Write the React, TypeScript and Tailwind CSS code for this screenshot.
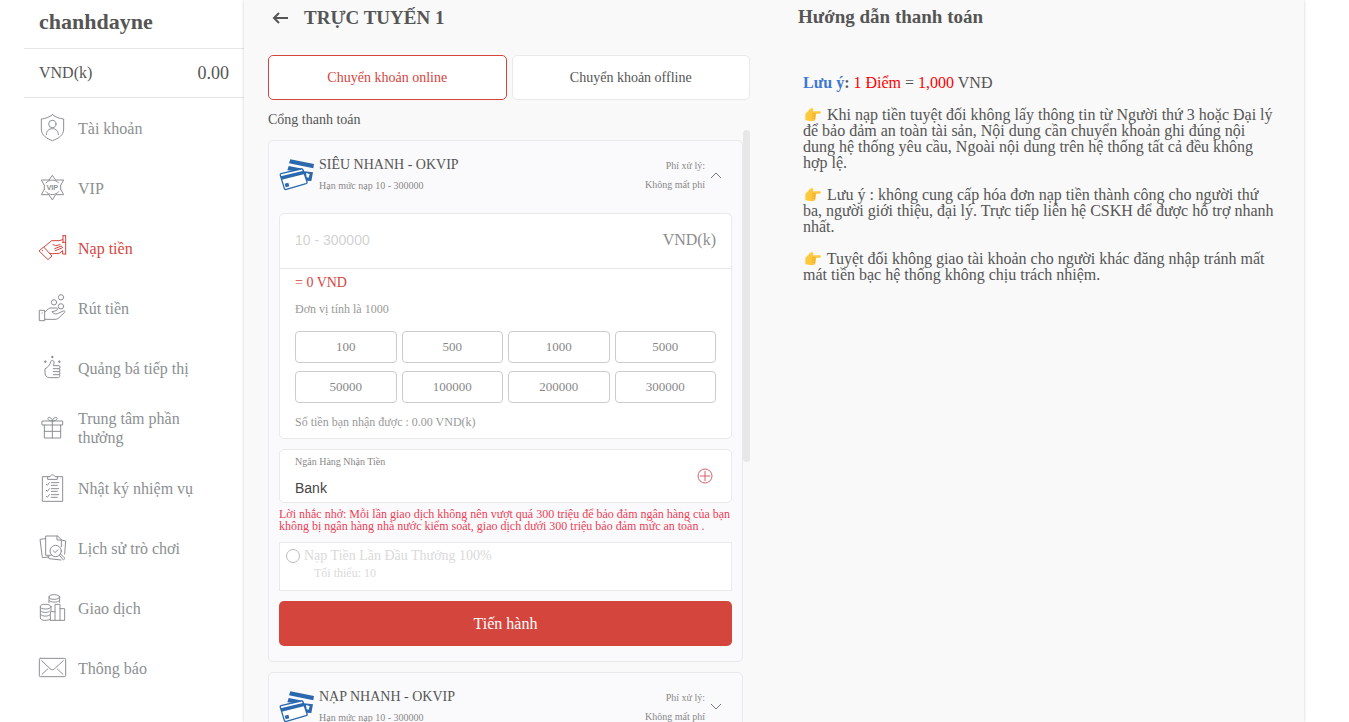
import { useState } from "react";
import type { ReactNode } from "react";

type MenuItem = {
  label: string;
  icon: ReactNode;
};

const menu: MenuItem[] = [
  {
    label: "Tài khoản",
    icon: (
      <>
        <path d="M43.500 2C33 10 22 14 10 15v30c0 19 15 28 33.500 35C62 73 77 64 77 45V15C65 14 54 10 43.500 2z" />
        <circle cx="43" cy="30" r="11" />
        <path d="M25 62c0-11 7-18 18-18s18 7 18 18" />
      </>
    ),
  },
  {
    label: "VIP",
    icon: (
      <>
        <path d="M33 18L43 4l10 14h24L68 34M33 18H10l9 16M19 46L10 62h23l10 16 10-16h24l-9-16" />
        <path d="M24 27a24 24 0 0 1 38 0M24 53a24 24 0 0 0 38 0M19 34v12M68 34v12" />
        <text
          x="43"
          y="48"
          textAnchor="middle"
          fontSize="22"
          fontWeight="bold"
          fontFamily="Liberation Sans, sans-serif"
          fill="currentColor"
          stroke="none"
        >
          VIP
        </text>
      </>
    ),
  },
  {
    label: "Nạp tiền",
    icon: (
      <>
        <path d="M4 50l13-11 25 27-11 10z" />
        <path d="M13 50h1" />
        <path d="M18 39l23-19h22l11-3M36 58l8 1 20-1 10-8M45 32l8 3 13-3M50 44l20-8 4 5-22 9" />
        <path d="M83 5v55M75 5h8M75 5v21M83 25h-9M74 51v9h9" />
      </>
    ),
  },
  {
    label: "Rút tiền",
    icon: (
      <>
        <path d="M5 49h15v31H5zM12 57h1" />
        <path d="M20 54c6-1 8-10 16-12h22c3 2 0 6-4 8l-12 3c2 4 9 9 16 6l18-8c5-2 6 3 3 5L62 72c-4 3-7 4-11 4H20" />
        <circle cx="69" cy="10" r="8" />
        <circle cx="48" cy="25" r="8" />
        <circle cx="69" cy="37" r="8" />
      </>
    ),
  },
  {
    label: "Quảng bá tiếp thị",
    icon: (
      <>
        <path d="M22 44c8-4 15-12 16-21 1-5 9-5 10 1 1 4-1 8-2 11h17c4 0 4 8 0 9 4 0 4 8 0 9 4 0 4 8 0 9 4 0 3 8-2 9H35c-8 0-14-5-14-13z" />
        <path d="M46 44h18M46 53h18M46 62h18" />
        <path d="M43 7v4M41 9h4M22 21v4M20 23h4M64 21v4M62 23h4" strokeWidth="4" />
      </>
    ),
  },
  {
    label: "Trung tâm phần thưởng",
    icon: (
      <>
        <rect x="13" y="21" width="61" height="12" />
        <path d="M19 33v39h49V33M43 21v51M19 52h49" />
        <path d="M43 21c-7 0-15-3-13-9 3-5 12 0 13 9 2-9 11-14 14-9 2 6-7 9-14 9z" />
      </>
    ),
  },
  {
    label: "Nhật ký nhiệm vụ",
    icon: (
      <>
        <path d="M30 8H13v74h61V8H57" />
        <path d="M29 15V8h7c2-7 13-7 15 0h7v7z" />
        <path d="M25 31l3 3 6-8M40 26h22M40 34h18M25 49l3 3 6-8M40 44h22M40 52h18M25 67l3 3 6-8M40 62h22M40 70h18" />
      </>
    ),
  },
  {
    label: "Lịch sử trò chơi",
    icon: (
      <>
        <path d="M23 14L6 16l7 55 20-2M39 64H23V6h36l11 11v21M57 6v12h12M70 18l13 3-3 39M30 66l3 8 36 4" />
        <circle cx="53" cy="51" r="17" />
        <path d="M46 50l5 6 9-9M65 63l3-3 13 13-4 4z" />
      </>
    ),
  },
  {
    label: "Giao dịch",
    icon: (
      <>
        <ellipse cx="49" cy="9" rx="16" ry="7" />
        <path d="M33 9v17M65 9v16M34 20c5 6 25 6 30 0" />
        <ellipse cx="23" cy="38" rx="16" ry="7" />
        <path d="M7 38v34c0 9 25 9 30 3M39 38v12M7 49c1 7 21 9 27 3M7 60c1 7 21 9 28 3" />
        <path d="M37 79V53h14M51 79V31h15v48M66 44h14v35H37" />
      </>
    ),
  },
  {
    label: "Thông báo",
    icon: (
      <>
        <rect x="4" y="13" width="79" height="55" rx="3" />
        <path d="M11 20l25 24c4 4 10 4 14 0l26-24M12 61l17-16M75 61L58 45" />
      </>
    ),
  },
];

const amounts = [100, 500, 1000, 5000, 50000, 100000, 200000, 300000];

function CardsIcon() {
  return (
    <svg viewBox="0 0 108 108" className="size-9 shrink-0" aria-hidden="true">
      <g fill="#2b68ae">
        <path d="M34 7l71 14-2 13-73-15z" />
        <path d="M25 40l4-13 42 8 4 8 27 3-5 26-14-1-9-26z" />
      </g>
      <path d="M81 48l11 3-3 11-6-1z" fill="#fff" />
      <path
        d="M6 50l60-14c3-1 5 0 6 3l12 35c1 3 0 5-3 6L22 97c-3 1-5 0-6-3L4 55c-1-3 0-4 2-5z"
        fill="#fff"
        stroke="#2b68ae"
        strokeWidth="4"
      />
      <path d="M5 58l69-17 3 10L8 68zM17 80l11-3 3 11-11 3z" fill="#2b68ae" />
    </svg>
  );
}

function PointingHand() {
  return (
    <svg
      viewBox="0 0 48 48"
      className="mx-0.5 inline-block size-4 align-top"
      aria-hidden="true"
    >
      <path
        d="M1 20c5-3 9-8 13-13 3-4 10-5 11-1 1 3-2 5-2 7h20c6 0 6 7 0 7H31c3 2 3 6 0 7 3 2 2 6-1 7 2 3 0 6-3 7-2 1-7 2-12 1-6-1-10-2-14-2z"
        fill="#ffc83d"
      />
      <path
        d="M31 20h-7M31 27h-8M30 34h-7"
        stroke="#e08f1b"
        strokeWidth="2"
        strokeLinecap="round"
        fill="none"
      />
    </svg>
  );
}

function Chevron({ open }: { open: boolean }) {
  return (
    <svg
      viewBox="0 0 12 12"
      className="size-3 shrink-0"
      fill="none"
      stroke="#767676"
      aria-hidden="true"
    >
      <path d={open ? "M1 9l5-5 5 5" : "M1 3l5 5 5-5"} />
    </svg>
  );
}

function MethodHeader({ name, open }: { name: string; open: boolean }) {
  return (
    <button
      type="button"
      aria-expanded={open}
      className="flex h-[72px] w-full items-center justify-between pr-2.5 pb-[5px] text-left"
    >
      <span className="flex items-center gap-1">
        <CardsIcon />
        <span className="flex flex-col">
          <span className="text-[14px] leading-[22px] text-[#555]">{name}</span>
          <span className="text-[10px] leading-5 text-[#888]">
            Hạn mức nạp 10 - 300000
          </span>
        </span>
      </span>
      <span className="flex items-center gap-[5px]">
        <span className="flex flex-col text-right text-[10px] leading-[19px] text-[#888]">
          <span>Phí xử lý:</span>
          <span>Không mất phí</span>
        </span>
        <Chevron open={open} />
      </span>
    </button>
  );
}

function Sidebar() {
  return (
    <aside className="w-[220px] shrink-0">
      <h2 className="h-12 px-[15px] pt-2 text-[22px] leading-7 font-bold">
        chanhdayne
      </h2>
      <div className="flex h-[50px] items-center justify-between border-y border-[#e6e6e6] px-[15px]">
        <span>VND(k)</span>
        <span className="text-[18px]">0.00</span>
      </div>
      <nav>
        {menu.map((item) => (
          <a
            key={item.label}
            href="#"
            className={`flex h-[60px] items-center gap-3 pr-10 pl-[14px] leading-[19px] ${
              item.label === "Nạp tiền" ? "text-[#d4453e]" : "text-[#8c8f92]"
            }`}
          >
            <svg
              viewBox="0 0 84 84"
              className="size-7 shrink-0 overflow-visible"
              fill="none"
              stroke="currentColor"
              strokeWidth="3"
              strokeLinejoin="round"
              strokeLinecap="round"
              aria-hidden="true"
            >
              {item.icon}
            </svg>
            {item.label}
          </a>
        ))}
      </nav>
    </aside>
  );
}

function DepositForm() {
  const [amount, setAmount] = useState<string>("");

  return (
    <div>
      <div className="rounded-[5px] border border-[#e9e9eb] bg-white">
        <div className="flex h-[55px] items-center justify-between border-b border-[#e6e6e6] px-[15px] pb-0.5 text-[#8c8c8c]">
          <input
            type="text"
            aria-label="10 - 300000"
            placeholder="10 - 300000"
            value={amount}
            onChange={(e) => setAmount(e.target.value)}
            className="min-w-0 flex-1 font-['Liberation_Sans',sans-serif] text-[14px] outline-none placeholder:text-[#d3d3d3]"
          />
          <span>VND(k)</span>
        </div>
        <div className="px-[15px] text-[12px] text-[#999]">
          <p className="pt-[3px] text-[14px] leading-[22px] text-[#d4453e]">
            = {Number(amount) * 1000 || 0} VND
          </p>
          <p className="pt-[3px] leading-6">Đơn vị tính là 1000</p>
          <div className="mt-2.5 grid grid-cols-4 gap-x-[5px] gap-y-2">
            {amounts.map((value) => (
              <button
                key={value}
                type="button"
                onClick={() => setAmount(String(value))}
                className="h-8 rounded border border-[#ccc] text-[13px] text-[#888]"
              >
                {value}
              </button>
            ))}
          </div>
          <p className="pt-2 pb-[5px] leading-[22px]">
            Số tiền bạn nhận được : 0.00 VND(k)
          </p>
        </div>
      </div>

      <div className="mt-2.5 flex h-[54px] items-center justify-between rounded-[5px] border border-[#e9e9eb] bg-white pr-[18px] pl-[15px]">
        <div className="flex min-w-0 flex-1 flex-col">
          <label htmlFor="bank" className="text-[10px] leading-6 text-[#888]">
            Ngân Hàng Nhận Tiền
          </label>
          <input
            id="bank"
            type="text"
            defaultValue="Bank"
            className="h-7 font-['Liberation_Sans',sans-serif] text-[14px] text-[#444] outline-none"
          />
        </div>
        <button type="button" aria-label="Bank">
          <svg viewBox="0 0 16 16" className="size-4" fill="none" stroke="#d4636a">
            <circle cx="8" cy="8" r="7" />
            <path d="M8 3v10M3 8h10" />
          </svg>
        </button>
      </div>

      <p className="mt-[5px] text-[12px] leading-3 text-[#ed3e56]">
        Lời nhắc nhở: Mỗi lần giao dịch không nên vượt quá 300 triệu để bảo đảm
        ngân hàng của bạn không bị ngân hàng nhà nước kiểm soát, giao dịch dưới
        300 triệu bảo đảm mức an toàn .
      </p>

      <div className="mt-2.5 h-[49px] border border-[#e9e9eb] bg-white pl-1.5 text-[#dadada]">
        <label className="flex items-center gap-1 pt-1 text-[14px] leading-[18px]">
          <input
            type="radio"
            name="promo"
            className="size-[14px] appearance-none rounded-full border border-[#bbb]"
          />
          Nạp Tiền Lần Đầu Thưởng 100%
        </label>
        <p className="pl-7 text-[12px] leading-4">Tối thiểu: 10</p>
      </div>

      <button
        type="button"
        className="mt-2.5 h-[45px] w-full rounded-[5px] bg-[#d4453e] text-[16px] text-white"
      >
        Tiến hành
      </button>
    </div>
  );
}

export default function App() {
  return (
    <div className="flex h-screen overflow-hidden bg-white pr-[45px] pl-6 font-['Liberation_Serif',serif] text-[16px] text-[#555]">
      <Sidebar />
      <main className="grid flex-1 grid-cols-2 gap-12 overflow-hidden bg-[#f9f9f9] px-6 shadow-[0_0_3px_rgba(0,0,0,0.2)]">
        <section className="flex min-h-0 flex-col">
          <header className="flex items-center gap-3 pt-1">
            <button type="button" aria-label="TRỰC TUYẾN 1" className="pl-1">
              <svg
                viewBox="0 0 20 20"
                className="size-5"
                fill="none"
                stroke="#555"
                strokeWidth="2"
                aria-hidden="true"
              >
                <path d="M16 10H2M7 5l-5 5 5 5" />
              </svg>
            </button>
            <h1 className="text-[19px] leading-7 font-bold">TRỰC TUYẾN 1</h1>
          </header>

          <div className="mt-[23px] grid grid-cols-2 gap-[5px] text-[14px]">
            <button
              type="button"
              className="h-[45px] rounded-[5px] border border-[#d4453e] bg-white text-[#d4453e]"
            >
              Chuyển khoản online
            </button>
            <button
              type="button"
              className="h-[45px] rounded-[5px] border border-[#e9e9e9] bg-white"
            >
              Chuyển khoản offline
            </button>
          </div>

          <p className="pt-2.5 text-[14px] leading-5">Cổng thanh toán</p>

          <div className="flex min-h-0 flex-1">
            <div className="flex min-w-0 flex-1 flex-col gap-2.5 overflow-hidden pt-2.5">
              <article className="shrink-0 rounded-[5px] border border-[#e9e9eb] bg-[#fafafc] px-2.5 pb-[15px]">
                <MethodHeader name="SIÊU NHANH - OKVIP" open />
                <DepositForm />
              </article>
              <article className="shrink-0 rounded-[5px] border border-[#e9e9eb] bg-[#fafafc] px-2.5 pb-[15px]">
                <MethodHeader name="NẠP NHANH - OKVIP" open={false} />
              </article>
            </div>
            <div className="h-[332px] w-[7px] rounded-full bg-[#e7e7e7]" />
          </div>
        </section>

        <section>
          <h2 className="pt-1 text-[19px] leading-[26px] font-bold">
            Hướng dẫn thanh toán
          </h2>
          <div className="flex flex-col gap-4 px-[5px] pt-[45px] leading-4">
            <p>
              <strong>
                <span className="text-[#3c78d0]">Lưu ý</span>:
              </strong>{" "}
              <span className="text-[#f00]">1 Điểm</span> ={" "}
              <span className="text-[#f00]">1,000</span> VNĐ
            </p>
            <p>
              <PointingHand /> Khi nạp tiền tuyệt đối không lấy thông tin từ
              Người thứ 3 hoặc Đại lý để bảo đảm an toàn tài sản, Nội dung cần
              chuyển khoản ghi đúng nội dung hệ thống yêu cầu, Ngoài nội dung
              trên hệ thống tất cả đều không hợp lệ.
            </p>
            <p>
              <PointingHand /> Lưu ý : không cung cấp hóa đơn nạp tiền thành
              công cho người thứ ba, người giới thiệu, đại lý. Trực tiếp liên hệ
              CSKH để được hỗ trợ nhanh nhất.
            </p>
            <p>
              <PointingHand /> Tuyệt đối không giao tài khoản cho người khác
              đăng nhập tránh mất mát tiền bạc hệ thống không chịu trách nhiệm.
            </p>
          </div>
        </section>
      </main>
    </div>
  );
}
